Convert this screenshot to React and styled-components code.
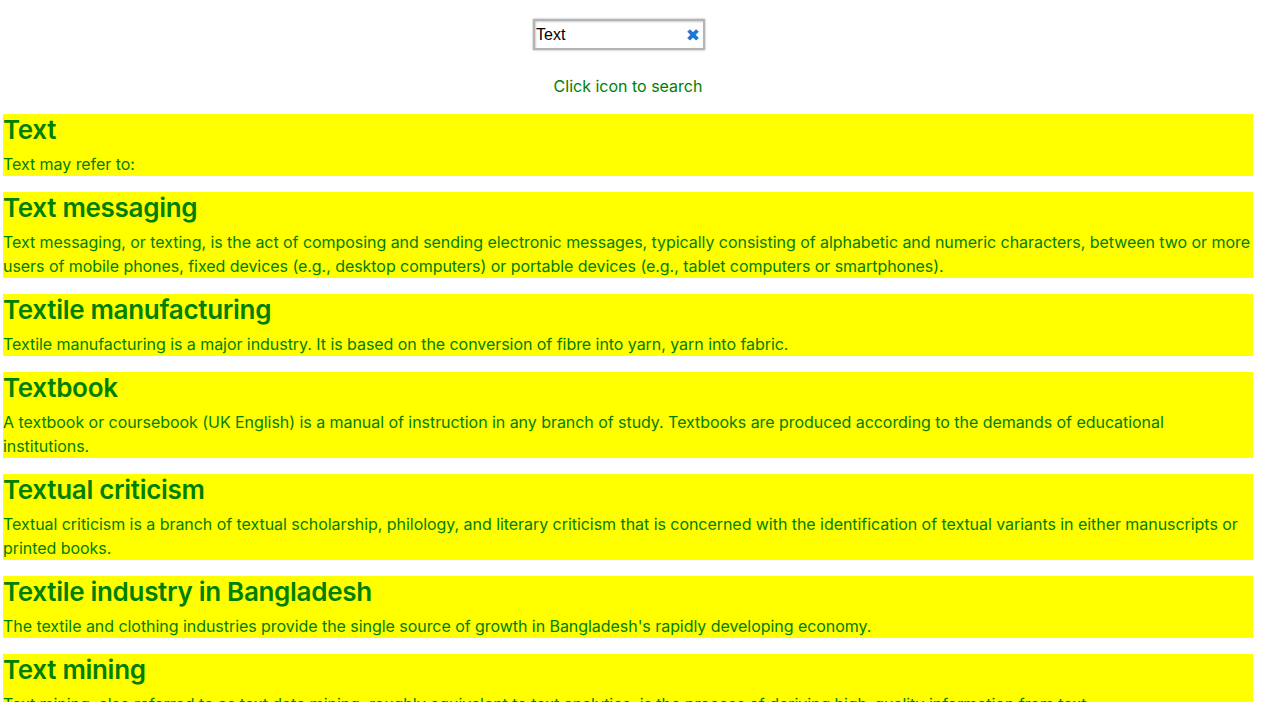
import React from "react";
import styled, { createGlobalStyle } from "styled-components";

const GlobalStyle = createGlobalStyle`
  body {
    margin: 0;
    background: #fff;
    font-family: Inter, "Liberation Sans", Arial, sans-serif;
  }
`;

const results = [
  { title: "Text", snippet: "Text may refer to:" },
  {
    title: "Text messaging",
    snippet:
      "Text messaging, or texting, is the act of composing and sending electronic messages, typically consisting of alphabetic and numeric characters, between two or more users of mobile phones, fixed devices (e.g., desktop computers) or portable devices (e.g., tablet computers or smartphones).",
  },
  {
    title: "Textile manufacturing",
    snippet:
      "Textile manufacturing is a major industry. It is based on the conversion of fibre into yarn, yarn into fabric.",
  },
  {
    title: "Textbook",
    snippet:
      "A textbook or coursebook (UK English) is a manual of instruction in any branch of study. Textbooks are produced according to the demands of educational institutions.",
  },
  {
    title: "Textual criticism",
    snippet:
      "Textual criticism is a branch of textual scholarship, philology, and literary criticism that is concerned with the identification of textual variants in either manuscripts or printed books.",
  },
  {
    title: "Textile industry in Bangladesh",
    snippet:
      "The textile and clothing industries provide the single source of growth in Bangladesh's rapidly developing economy.",
  },
  {
    title: "Text mining",
    snippet:
      "Text mining, also referred to as text data mining, roughly equivalent to text analytics, is the process of deriving high-quality information from text.",
  },
];

const App = () => {
  return (
    <Page>
      <GlobalStyle />
      <SearchRow>
        <SearchBox>
          <SearchInput defaultValue="Text" />
          <ClearIcon>✖</ClearIcon>
        </SearchBox>
      </SearchRow>
      <Hint>Click icon to search</Hint>
      <ResultList>
        {results.map((r) => (
          <Result key={r.title}>
            <Title>{r.title}</Title>
            <Snippet>{r.snippet}</Snippet>
          </Result>
        ))}
      </ResultList>
    </Page>
  );
};

const Page = styled.div`
  width: 1250px;
  margin-left: 3px;
  height: 702px;
  overflow: hidden;
`;

const SearchRow = styled.div`
  display: flex;
  justify-content: center;
  padding-top: 19px;
  padding-right: 18px;
`;

const SearchBox = styled.div`
  position: relative;
  width: 172px;
  height: 31px;
  box-sizing: border-box;
  border: 2px solid #b4b4b4;
  box-shadow: inset 1px 1px 2px rgba(0, 0, 0, 0.2), 0 0 2px rgba(0, 0, 0, 0.35);
  background: #fff;
`;

const SearchInput = styled.input`
  width: 100%;
  height: 100%;
  box-sizing: border-box;
  border: none;
  outline: none;
  padding: 0 24px 0 1px;
  font-family: "Liberation Sans", Arial, sans-serif;
  font-size: 16px;
  color: #000;
  background: transparent;
`;

const ClearIcon = styled.span`
  position: absolute;
  right: 3px;
  top: 50%;
  transform: translateY(-50%);
  color: #1b78d6;
  font-family: "DejaVu Sans", sans-serif;
  font-size: 17px;
  line-height: 1;
`;

const Hint = styled.p`
  margin: 26px 0 18px;
  text-align: center;
  color: #008000;
  font-size: 16px;
  line-height: 20px;
`;

const ResultList = styled.div`
  display: flex;
  flex-direction: column;
  gap: 16px;
`;

const Result = styled.div`
  background: #ffff00;
  color: #008000;
`;

const Title = styled.h2`
  margin: 0 0 7px;
  padding-top: 1px;
  font-size: 26px;
  font-weight: 600;
  line-height: 30px;
  letter-spacing: -0.3px;
`;

const Snippet = styled.p`
  margin: 0;
  font-size: 16px;
  line-height: 24px;
  letter-spacing: -0.05px;
`;

export default App;
